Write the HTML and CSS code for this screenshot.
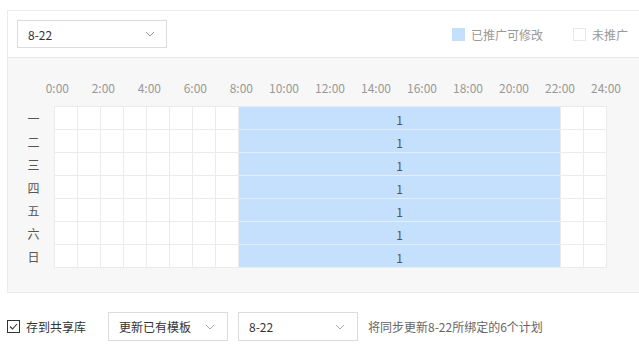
FILE: index.html
```html
<!DOCTYPE html>
<html lang="zh-CN">

<head>
    <meta charset="UTF-8">
    <meta name="viewport" content="width=device-width, initial-scale=1.0">
    <title>推广时段</title>
    <link rel="stylesheet" href="styles.css">
</head>

<body>
    <!-- Schedule panel -->
    <div class="panel">
        <div class="panel-head">
            <div class="select select-wide">
                <span>8-22</span>
                <svg class="chevron" width="10" height="6" viewBox="0 0 10 6"><path d="M1 1 L5 5 L9 1" fill="none" stroke="#999" stroke-width="1"/></svg>
            </div>
            <div class="legend">
                <span class="legend-item"><i class="swatch swatch-on"></i>已推广可修改</span>
                <span class="legend-item"><i class="swatch swatch-off"></i>未推广</span>
            </div>
        </div>

        <div class="panel-body">
            <div class="hours" id="hours"></div>
            <div class="days" id="days"></div>
        </div>
    </div>

    <!-- Save options -->
    <div class="footer">
        <label class="check">
            <span class="check-box">
                <svg width="11" height="11" viewBox="0 0 11 11"><path d="M2 5.5 L4.5 8 L9 3" fill="none" stroke="#333" stroke-width="1.1"/></svg>
            </span>
            存到共享库
        </label>
        <div class="select select-mid">
            <span>更新已有模板</span>
            <svg class="chevron" width="10" height="6" viewBox="0 0 10 6"><path d="M1 1 L5 5 L9 1" fill="none" stroke="#aaa" stroke-width="1"/></svg>
        </div>
        <div class="select select-mid">
            <span>8-22</span>
            <svg class="chevron" width="10" height="6" viewBox="0 0 10 6"><path d="M1 1 L5 5 L9 1" fill="none" stroke="#aaa" stroke-width="1"/></svg>
        </div>
        <span class="note">将同步更新8-22所绑定的6个计划</span>
    </div>

    <script>
        // Hour labels every 2 hours
        const hours = document.getElementById('hours');
        for (let h = 0; h <= 24; h += 2) {
            hours.innerHTML += `<span class="hour">${h}:00</span>`;
        }

        // One row per weekday, hours 8-22 are on
        const dayNames = ['一', '二', '三', '四', '五', '六', '日'];
        const start = 8, end = 22;
        const days = document.getElementById('days');
        dayNames.forEach(name => {
            let cells = '';
            for (let h = 0; h < start; h++) cells += '<div class="cell"></div>';
            cells += `<div class="cell cell-on" style="width: ${(end - start) * 23 - 1}px">1</div>`;
            for (let h = end; h < 24; h++) cells += '<div class="cell"></div>';
            days.innerHTML += `
                <div class="day">
                    <span class="day-name">${name}</span>
                    <div class="day-cells">${cells}</div>
                </div>
            `;
        });
    </script>
</body>

</html>
```

FILE: styles.css
```css
/* Page */
body {
    font-family: "Noto Sans CJK SC", "Noto Sans", sans-serif;
    font-size: 12px;
    color: #333;
    margin: 0;
    background-color: white;
}

.panel {
    margin: 10px 0 0 7px;
    border: 1px solid #ebebeb;
    border-right: none;
}

.panel-head {
    display: flex;
    align-items: center;
    justify-content: space-between;
    padding: 9px 11px 9px 9px;
    border-bottom: 1px solid #e8e8e8;
}

/* Select boxes */
.select {
    display: flex;
    align-items: center;
    justify-content: space-between;
    box-sizing: border-box;
    background-color: white;
    border: 1px solid #dcdcdc;
    padding: 0 10px;
    color: #333;
}

.select-wide {
    width: 150px;
    height: 28px;
    padding-right: 11px;
}

.select-mid {
    width: 120px;
    height: 29px;
    padding-right: 12px;
}

.legend {
    display: flex;
    gap: 30px;
    color: #999;
}

.legend-item {
    display: flex;
    align-items: center;
}

.swatch {
    display: inline-block;
    width: 13px;
    height: 13px;
    margin-right: 6px;
    box-sizing: border-box;
}

.swatch-on {
    background-color: #c4e0fc;
}

.swatch-off {
    background-color: white;
    border: 1px solid #e8e8e8;
}

/* Schedule grid */
.panel-body {
    background-color: #f7f7f7;
    padding: 22px 0 24px 0;
}

.hours {
    display: flex;
    margin-left: 15px;
    margin-bottom: 10px;
    line-height: 16px;
    color: #999;
}

.hour {
    width: 46px;
    text-align: right;
}

.day {
    display: flex;
    align-items: center;
}

.day-name {
    width: 41px;
    padding-left: 5px;
    text-align: center;
    color: #555;
}

.day-cells {
    display: flex;
    border-left: 1px solid #ebebeb;
}

.day:first-child .day-cells {
    border-top: 1px solid #ebebeb;
}

.cell {
    width: 22px;
    height: 22px;
    background-color: white;
    border-right: 1px solid #ebebeb;
    border-bottom: 1px solid #ebebeb;
}

.cell-on {
    background-color: #c4e0fc;
    border-bottom-color: #e4eef8;
    text-align: center;
    line-height: 26px;
    color: #555;
}

/* Footer */
.footer {
    display: flex;
    align-items: center;
    margin: 19px 0 0 7px;
}

.check {
    display: flex;
    align-items: center;
    margin-right: 22px;
}

.check-box {
    display: flex;
    align-items: center;
    justify-content: center;
    width: 13px;
    height: 13px;
    box-sizing: border-box;
    border: 1px solid #333;
    margin-right: 6px;
}

.footer .select {
    margin-right: 10px;
}

.note {
    color: #666;
}
```
